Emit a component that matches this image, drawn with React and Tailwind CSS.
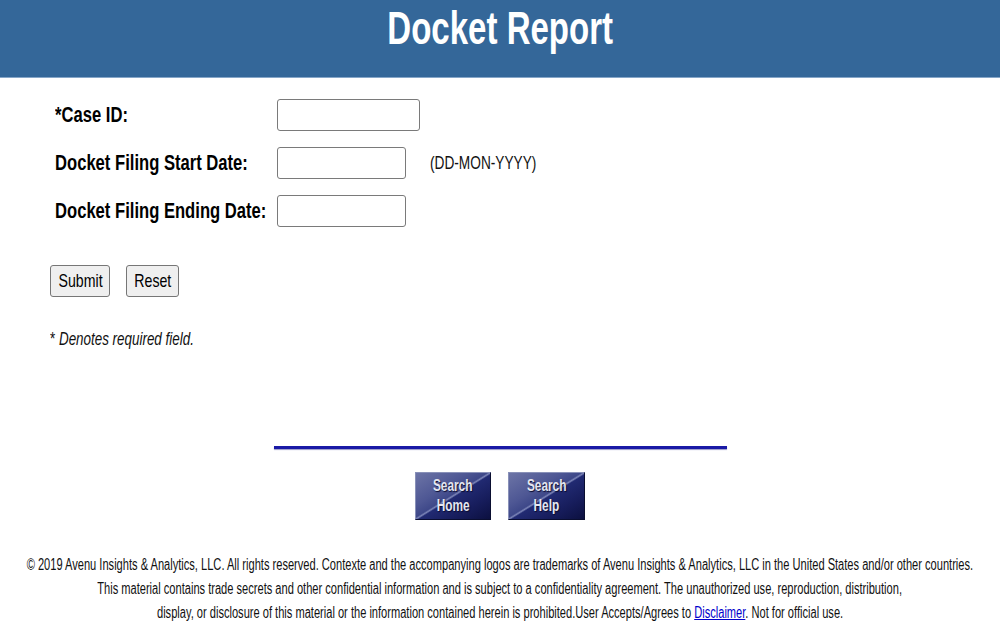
import React from "react";
import clsx from "clsx";

// text in the shot is horizontally squeezed, so every run of text is narrowed
const Narrow = ({ children, className, scale }) => (
  <span
    className={clsx(
      "inline-block whitespace-nowrap",
      scale || "scale-x-[0.745]",
      className || "origin-left"
    )}
  >
    {children}
  </span>
);

const Field = ({ label, width, hint }) => (
  <>
    <div className="text-[22px] font-bold leading-[26px] text-black">
      <Narrow scale="scale-x-[0.755]">{label}</Narrow>
    </div>
    <div className="flex items-center">
      <input
        type="text"
        className={clsx(
          "h-[32px] rounded-[3px] border border-[#7a7a7a] bg-white px-1 outline-none",
          width
        )}
      />
      {hint && (
        <span className="ml-[24px] text-[18px] leading-[21px] text-[#111]">
          <Narrow scale="scale-x-[0.76]">{hint}</Narrow>
        </span>
      )}
    </div>
  </>
);

const ImgButton = ({ top, bottom, width }) => (
  <button
    className={clsx(
      "flex h-[48px] flex-col items-center justify-center border border-t-[#8890b8] border-l-[#8890b8] border-r-[#0a0e30] border-b-[#0a0e30] bg-[linear-gradient(to_bottom_right,#6c74a6_0%,#4e5794_35%,#3e4889_48%,#7d86b8_50%,#212a72_52%,#171d5c_75%,#0c1040_100%)] text-[16px] font-bold leading-[20px] text-[#e4e6f0] [text-shadow:1px_1px_1px_#0a0c30]",
      width
    )}
  >
    <Narrow className="origin-center" scale="scale-x-[0.74]">{top}</Narrow>
    <Narrow className="origin-center" scale="scale-x-[0.74]">{bottom}</Narrow>
  </button>
);

const App = () => {
  return (
    <div className="min-h-screen overflow-hidden bg-white font-['Liberation_Sans',Arial,sans-serif] text-black">
      <header className="flex h-[78px] justify-center border-b border-[#86a6c8] bg-[#346799] pt-[2px]">
        <h1 className="text-[46px] font-bold leading-[53px] text-white">
          <Narrow className="origin-center" scale="scale-x-[0.718]">Docket Report</Narrow>
        </h1>
      </header>

      <main className="px-[50px]">
        <div className="mt-[21px] ml-[5px] grid grid-cols-[222px_auto] items-center gap-y-4">
          <Field label="*Case ID:" width="w-[143px]" />
          <Field label="Docket Filing Start Date:" width="w-[129px]" hint="(DD-MON-YYYY)" />
          <Field label="Docket Filing Ending Date:" width="w-[129px]" />
        </div>

        <div className="mt-[38px] flex gap-4">
          <button className="h-[32px] w-[60px] rounded-[3px] border border-[#767676] bg-[#efefef] text-[19px] leading-[22px]">
            <Narrow className="origin-center">Submit</Narrow>
          </button>
          <button className="h-[32px] w-[53px] rounded-[3px] border border-[#767676] bg-[#efefef] text-[19px] leading-[22px]">
            <Narrow className="origin-center">Reset</Narrow>
          </button>
        </div>

        <p className="mt-[32px] text-[18px] leading-[21px] text-[#111]">
          <Narrow>
            * <i>Denotes required field.</i>
          </Narrow>
        </p>
      </main>

      <div className="mt-[96px] flex justify-center">
        <div className="h-[3px] w-[453px] bg-[#1a1aa6] shadow-[0_1px_1px_#9a9ac8]" />
      </div>

      <div className="mt-[23px] flex justify-center gap-[17px]">
        <ImgButton top="Search" bottom="Home" width="w-[76px]" />
        <ImgButton top="Search" bottom="Help" width="w-[77px]" />
      </div>

      <footer className="mt-[33px] flex flex-col items-center text-[16px] leading-[24px] text-[#111]">
        <Narrow className="origin-center" scale="scale-x-[0.693]">
          © 2019 Avenu Insights &amp; Analytics, LLC. All rights reserved. Contexte and the accompanying logos are trademarks of Avenu Insights &amp; Analytics, LLC in the United States and/or other countries.
        </Narrow>
        <Narrow className="origin-center" scale="scale-x-[0.693]">
          This material contains trade secrets and other confidential information and is subject to a confidentiality agreement. The unauthorized use, reproduction, distribution,
        </Narrow>
        <Narrow className="origin-center" scale="scale-x-[0.693]">
          display, or disclosure of this material or the information contained herein is prohibited.User Accepts/Agrees to{" "}
          <a href="#" className="text-[#0000cc] underline">Disclaimer</a>. Not for official use.
        </Narrow>
      </footer>
    </div>
  );
};

export default App;
